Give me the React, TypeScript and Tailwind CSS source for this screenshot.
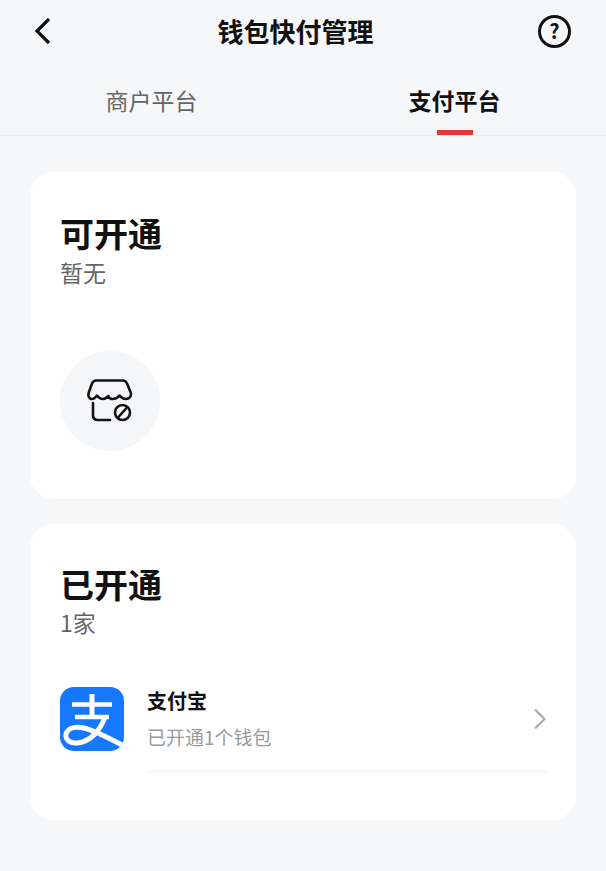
import React from 'react';

const font = "font-['Noto_Sans_CJK_SC','Noto_Sans',sans-serif]";

function BackIcon() {
  return (
    <svg width="20" height="30" viewBox="0 0 20 30" fill="none">
      <path d="M16 3 L4 15 L16 27" stroke="#111" strokeWidth="3.2" />
    </svg>
  );
}

function HelpIcon() {
  return (
    <div className="flex h-[33px] w-[33px] items-center justify-center rounded-full border-[3px] border-[#111] text-[20px] leading-none font-bold text-[#111]">
      ?
    </div>
  );
}

function ShopOffIcon() {
  return (
    <svg width="46" height="44" viewBox="0 0 46 44" fill="none" stroke="#141414" strokeWidth="2.6" strokeLinecap="round" strokeLinejoin="round">
      <path d="M9 1.5 H36 C38 1.5 39 2.5 40 4.5 L43.5 13 C45 17 42.5 20 39 20 C36 20 34 18.5 32.5 16.5 C31 18.5 29 20 26 20 C23.5 20 21.5 18.5 21.5 17 C20 18.5 18 20 15.5 20 C13 20 11.5 18.5 10 16.5 C8.5 18.5 7 20 5 20 C2 20 0.5 17 2 13 L5 4.5 C6 2.5 7 1.5 9 1.5 Z" />
      <path d="M6 24 V36 C6 39.5 7.5 41 11 41 H23" />
      <circle cx="35.5" cy="33.5" r="7.5" />
      <path d="M31.5 38 L39.5 29" />
    </svg>
  );
}

function AlipayLogo() {
  return (
    <div className="h-16 w-16 overflow-hidden rounded-[14px] bg-[#1677ff]">
      <svg width="64" height="64" viewBox="0 0 64 64" fill="none">
        <path d="M12 17.5 H52 M15 30 H49" stroke="#fff" strokeWidth="4.4" />
        <path d="M32 7 V30" stroke="#fff" strokeWidth="5" />
        <path
          d="M45 30 C40 44 30 55 17 56 C9 56.5 5 52 6 47.5 C7 42 13 39.5 21 40.5 C33 42 48 51 64 59"
          stroke="#fff"
          strokeWidth="5"
        />
      </svg>
    </div>
  );
}

export default function App() {
  return (
    <div className={`${font} h-[871px] w-[606px] overflow-hidden bg-[#f6f7f9]`}>
      <div className="flex h-[62px] items-center justify-between pr-[35px] pl-[33px]">
        <BackIcon />
        <h1 className="text-[26px] leading-none font-bold text-[#111]">钱包快付管理</h1>
        <HelpIcon />
      </div>

      <div className="flex h-[74px] border-b border-[#ebecee]">
        <div className="flex w-[303px] justify-center pt-[22px] text-[23px] leading-[32px] text-[#666]">
          <span className="ml-[0px]">商户平台</span>
        </div>
        <div className="flex w-[303px] flex-col items-center pt-[22px]">
          <span className="text-[23px] leading-[32px] font-bold text-[#111]">支付平台</span>
          <div className="mt-[14px] h-[5px] w-[36px] bg-[#e8363a]" />
        </div>
      </div>

      <div className="flex flex-col gap-[25px] px-[30px] pt-[36px]">
        <section className="h-[327px] rounded-[24px] bg-white pt-[39px] pl-[30px]">
          <h2 className="text-[34px] leading-[44px] font-bold text-[#111]">可开通</h2>
          <p className="mt-[1px] text-[23px] leading-[32px] text-[#666]">暂无</p>
          <div className="mt-[63px] flex h-[100px] w-[100px] items-center justify-center rounded-full bg-[#f5f6f8]">
            <ShopOffIcon />
          </div>
        </section>

        <section className="h-[296px] rounded-[24px] bg-white pt-[38px] pl-[30px]">
          <h2 className="text-[34px] leading-[44px] font-bold text-[#111]">已开通</h2>
          <p className="mt-[1px] text-[23px] leading-[30px] text-[#666]">1家</p>
          <div className="mt-[50px] flex gap-[23px]">
            <AlipayLogo />
            <div className="mr-[29px] h-[85px] flex-1 border-b border-[#f0f0f2]">
              <div className="flex items-center justify-between">
                <div>
                  <div className="text-[20px] leading-[28px] font-bold text-[#111]">支付宝</div>
                  <div className="mt-[8px] text-[19px] leading-[28px] text-[#999]">已开通1个钱包</div>
                </div>
                <svg width="16" height="24" viewBox="0 0 16 24" fill="none" className="mr-[-1px]">
                  <path d="M3 2.5 L12.5 12 L3 21.5" stroke="#aaa" strokeWidth="2.2" />
                </svg>
              </div>
            </div>
          </div>
        </section>
      </div>
    </div>
  );
}
